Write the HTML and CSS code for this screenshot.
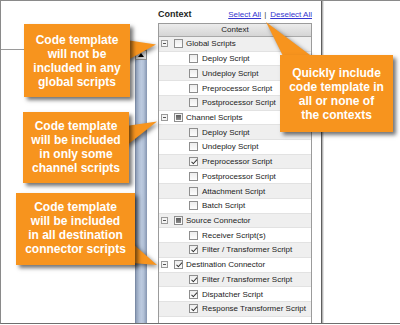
FILE: index.html
```html
<!DOCTYPE html>
<html>
<head>
	<meta charset="UTF-8">
	<title>Context</title>
	<link rel="stylesheet" href="styles.css">
</head>
<body>
	<div id="frame">
		<div id="left_pane">
			<div class="pane_head"></div>
			<div class="pane_body">
				<div class="scrollbar">
					<div class="scroll_up"></div>
					<div class="scroll_thumb"></div>
				</div>
			</div>
		</div>

		<div id="context_pane">
			<div class="context_head">
				<b>Context</b>
				<span class="links"><a href="#">Select All</a><span class="sep">|</span><a href="#">Deselect All</a></span>
			</div>
			<div class="tree">
				<div class="tree_head">Context</div>
				<ul>
					<li class="node"><i class="toggle"></i><i class="check"></i>Global Scripts</li>
					<li class="leaf"><i class="check"></i>Deploy Script</li>
					<li class="leaf"><i class="check"></i>Undeploy Script</li>
					<li class="leaf"><i class="check"></i>Preprocessor Script</li>
					<li class="leaf"><i class="check"></i>Postprocessor Script</li>
					<li class="node"><i class="toggle"></i><i class="check part"></i>Channel Scripts</li>
					<li class="leaf"><i class="check"></i>Deploy Script</li>
					<li class="leaf"><i class="check"></i>Undeploy Script</li>
					<li class="leaf"><i class="check on"></i>Preprocessor Script</li>
					<li class="leaf"><i class="check"></i>Postprocessor Script</li>
					<li class="leaf"><i class="check"></i>Attachment Script</li>
					<li class="leaf"><i class="check"></i>Batch Script</li>
					<li class="node"><i class="toggle"></i><i class="check part"></i>Source Connector</li>
					<li class="leaf"><i class="check"></i>Receiver Script(s)</li>
					<li class="leaf"><i class="check on"></i>Filter / Transformer Script</li>
					<li class="node"><i class="toggle"></i><i class="check on"></i>Destination Connector</li>
					<li class="leaf"><i class="check on"></i>Filter / Transformer Script</li>
					<li class="leaf"><i class="check on"></i>Dispatcher Script</li>
					<li class="leaf"><i class="check on"></i>Response Transformer Script</li>
				</ul>
			</div>
		</div>

		<div id="right_pane"></div>
	</div>

	<!-- callout pointers -->
	<svg id="pointers" width="400" height="325" viewBox="0 0 400 325">
		<polygon points="126,40 156,44.5 126,61" />
		<polygon points="126,126 157,121.5 126,146" />
		<polygon points="132,243 157,265 132,263" />
		<polygon points="266,22 284,58 314,58" />
	</svg>

	<div class="callout" id="tip_global">Code template<br>will not be<br>included in any<br>global scripts</div>
	<div class="callout" id="tip_channel">Code template<br>will be included<br>in only some<br>channel scripts</div>
	<div class="callout" id="tip_dest">Code template<br>will be included<br>in all destination<br>connector scripts</div>
	<div class="callout" id="tip_all">Quickly include<br>code template in<br>all or none of<br>the contexts</div>
</body>
</html>
```

FILE: styles.css
```css
* {
	padding: 0;
	margin: 0;
}

li {
	list-style: none;
}

body {
	position: relative;
	width: 400px;
	height: 325px;
	overflow: hidden;
	background: #fff;
	font-family: "Liberation Sans", Arial, sans-serif;
	color: #222;
}

#frame {
	display: flex;
	height: 324px;
	box-sizing: border-box;
	border-top: 1px solid #8a8a8a;
	border-left: 1px solid #8a8a8a;
	border-bottom: 1px solid #6e6e6e;
}

/* left panel with its scrollbar */
#left_pane {
	width: 146px;
	display: flex;
	flex-direction: column;
}

#left_pane .pane_head {
	height: 48px;
	border-bottom: 1px solid #9a9a9a;
}

#left_pane .pane_body {
	flex: 1;
	display: flex;
	justify-content: flex-end;
}

.scrollbar {
	width: 12px;
	display: flex;
	flex-direction: column;
}

.scroll_up {
	position: relative;
	height: 10px;
	box-sizing: border-box;
	border: 1px solid #8b8b8b;
	background: linear-gradient(#f6f6f6, #d9d9d9);
}

.scroll_up::after {
	content: "";
	position: absolute;
	left: 2px;
	top: 2px;
	border-left: 3px solid transparent;
	border-right: 3px solid transparent;
	border-bottom: 4px solid #000;
}

.scroll_thumb {
	flex: 1;
	border-left: 1px solid #7b8ba5;
	background: linear-gradient(to right, #8d9db7, #b2c1d7 30%, #bccadf 50%, #b2c1d7 70%, #8595b0);
}

/* context tree */
#context_pane {
	width: 174px;
	box-sizing: border-box;
	padding: 0 9px 0 11px;
	display: flex;
	flex-direction: column;
}

.context_head {
	height: 22px;
	box-sizing: border-box;
	padding-top: 8px;
	display: flex;
	justify-content: space-between;
	align-items: baseline;
	line-height: 11px;
}

.context_head b {
	font-size: 9px;
	color: #1e1e1e;
}

.links {
	font-size: 8px;
	color: #444;
}

.links a {
	color: #3535cf;
	text-decoration: underline;
}

.links .sep {
	margin: 0 4px 0 3px;
}

.tree {
	flex: 1;
	overflow: hidden;
	border: 1px solid #9b9b9b;
	border-bottom: none;
}

.tree_head {
	height: 12px;
	line-height: 12px;
	border-bottom: 1px solid #a8a8a8;
	background: linear-gradient(#ececec, #d5d5d5);
	font-size: 8px;
	text-align: center;
	color: #222;
}

.tree li {
	height: 14.72px;
	box-sizing: border-box;
	border-bottom: 1px solid #e2e2e2;
	display: flex;
	align-items: center;
	font-size: 8px;
	white-space: nowrap;
}

.tree li:nth-child(odd) {
	background-color: #efefef;
}

.tree .node {
	padding-left: 2px;
}

.tree .leaf {
	padding-left: 30px;
}

.toggle {
	position: relative;
	width: 7px;
	height: 7px;
	box-sizing: border-box;
	border: 1px solid #9a9a9a;
	background: #f4f4f4;
	margin-right: 6px;
}

.toggle::after {
	content: "";
	position: absolute;
	left: 1px;
	top: 2px;
	width: 3px;
	height: 1px;
	background: #555;
}

.check {
	position: relative;
	width: 9px;
	height: 9px;
	box-sizing: border-box;
	border: 1px solid #8e8e8e;
	background: linear-gradient(#ededed, #fdfdfd);
	margin-right: 3px;
}

.leaf .check {
	margin-right: 4px;
}

.check.part::after {
	content: "";
	position: absolute;
	left: 1px;
	top: 1px;
	width: 5px;
	height: 5px;
	background: linear-gradient(#5c5c5c, #8a8a8a);
}

.check.on::after {
	content: "";
	position: absolute;
	left: 2.5px;
	top: 0;
	width: 1.5px;
	height: 4.5px;
	border-right: 1.5px solid #333;
	border-bottom: 1.5px solid #333;
	transform: rotate(42deg);
}

#right_pane {
	flex: 1;
	border-left: 1px solid #5f5f5f;
	box-shadow: inset 1px 0 0 #b5b5b5, inset 2px 0 0 #e2e2e2;
}

/* orange callouts */
#pointers {
	position: absolute;
	left: 0;
	top: 0;
	fill: #f7941e;
	filter: drop-shadow(2px 2px 2px rgba(0, 0, 0, 0.5));
}

.callout {
	position: absolute;
	box-sizing: border-box;
	background-color: #f7941e;
	color: #fff;
	font-size: 12px;
	font-weight: bold;
	line-height: 14px;
	text-align: center;
	box-shadow: 3px 3px 4px rgba(0, 0, 0, 0.55);
}

#tip_global {
	left: 24px;
	top: 24px;
	width: 106px;
	height: 73px;
	padding-top: 9px;
}

#tip_channel {
	left: 23px;
	top: 112px;
	width: 106px;
	height: 71px;
	padding-top: 7px;
}

#tip_dest {
	left: 16px;
	top: 193px;
	width: 119px;
	height: 72px;
	padding-top: 7px;
}

#tip_all {
	left: 280px;
	top: 55px;
	width: 113px;
	height: 77px;
	padding-top: 11px;
}
```
